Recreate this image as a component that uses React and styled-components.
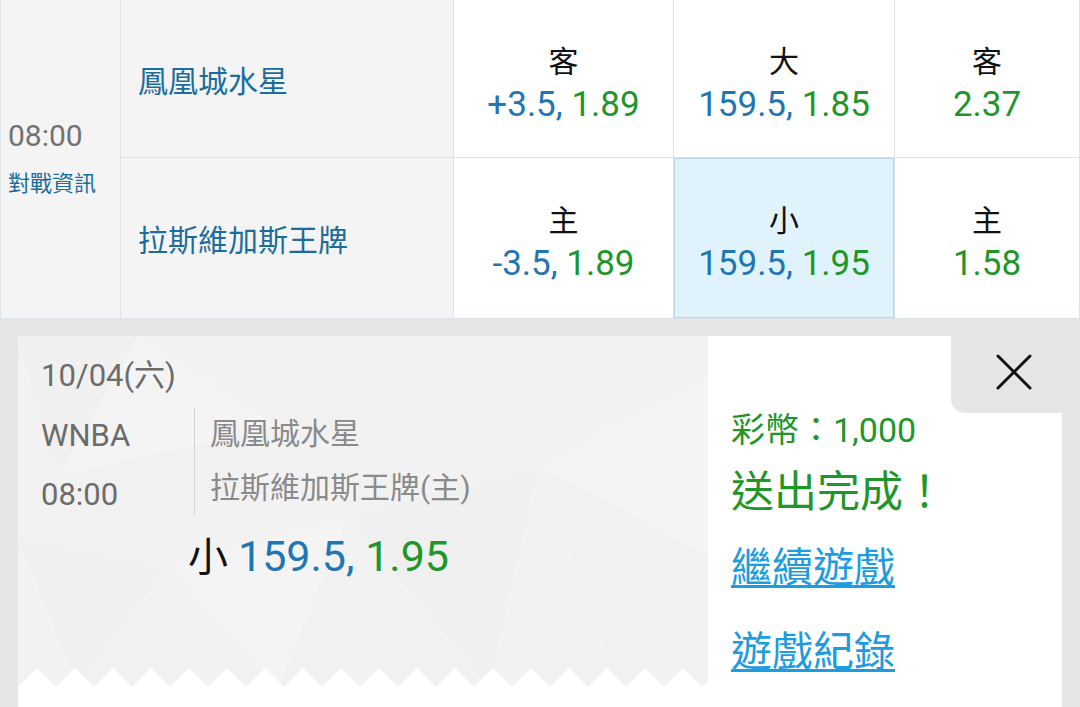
import React from 'react';
import styled, { createGlobalStyle } from 'styled-components';

const GlobalStyle = createGlobalStyle`
  html, body {
    margin: 0;
    padding: 0;
    height: 707px;
    overflow: hidden;
    background: #e6e6e6;
  }
  body {
    font-family: Roboto, "Noto Sans CJK TC", sans-serif;
  }
`;

const BLUE = '#1f76b2';
const GREEN = '#1f962a';
const LINE = '#dce3e8';

const patternSvg = `<svg xmlns='http://www.w3.org/2000/svg' width='690' height='351'>
<rect width='690' height='351' fill='#f2f2f2'/>
<polygon points='0,0 120,0 40,140' fill='#f0f0f0'/>
<polygon points='40,140 120,0 260,90' fill='#f4f4f4'/>
<polygon points='260,90 420,0 520,130' fill='#f1f1f1'/>
<polygon points='520,130 690,40 690,220' fill='#f4f4f4'/>
<polygon points='0,200 150,230 60,351' fill='#f0f0f0'/>
<polygon points='150,230 330,180 260,351' fill='#f4f4f4'/>
<polygon points='330,180 520,130 470,351' fill='#f0f0f0'/>
<polygon points='520,130 690,220 600,351' fill='#f1f1f1'/>
<polygon points='40,140 260,90 150,230' fill='#f1f1f1'/>
</svg>`;

const teethSvg = `<svg xmlns='http://www.w3.org/2000/svg' width='38' height='19'>
<polygon points='0,19 19,0 38,19' fill='#ffffff'/>
</svg>`;

const svgUrl = (s) => `url("data:image/svg+xml,${encodeURIComponent(s)}")`;

const Board = styled.div`
  display: grid;
  grid-template-columns: 120px 333px 220px 221px 1fr;
  grid-template-rows: 158px 161px;
  border-left: 1px solid ${LINE};
  background: #fff;
`;

const Cell = styled.div`
  border-right: 1px solid ${LINE};
  border-bottom: 1px solid ${LINE};
  box-sizing: border-box;
`;

const TimeCell = styled(Cell)`
  grid-row: span 2;
  background: #f4f4f4;
  display: flex;
  flex-direction: column;
  justify-content: center;
  padding: 0 0 4px 7px;
`;

const Clock = styled.div`
  font-size: 30px;
  line-height: 44px;
  color: #727272;
`;

const InfoLink = styled.div`
  margin-top: 9px;
  font-size: 22px;
  line-height: 34px;
  color: #1c6d9c;
`;

const TeamCell = styled(Cell)`
  background: #f4f4f4;
  display: flex;
  align-items: center;
  padding-left: 17px;
  font-size: 30px;
  color: #1c6d9c;
`;

const OddsCell = styled(Cell)`
  display: flex;
  flex-direction: column;
  align-items: center;
  justify-content: center;
  padding-top: 12px;
  background: ${(p) => (p.$active ? '#e0f3fc' : '#fff')};
  box-shadow: ${(p) => (p.$active ? 'inset 0 0 0 1px #b9d4e4' : 'none')};
`;

const Side = styled.div`
  font-size: 30px;
  line-height: 40px;
  color: #111;
`;

const Price = styled.div`
  font-size: 35px;
  line-height: 46px;
`;

const Blue = styled.span`
  color: ${BLUE};
`;

const Green = styled.span`
  color: ${GREEN};
`;

const Lower = styled.div`
  padding: 17px 18px 0 18px;
`;

const Card = styled.div`
  position: relative;
  display: flex;
  height: 380px;
  background: #fff;
`;

const Ticket = styled.div`
  width: 690px;
  height: 351px;
  box-sizing: border-box;
  padding: 18px 0 0 23px;
  background: ${svgUrl(teethSvg)} left bottom / 38px 19px repeat-x, ${svgUrl(patternSvg)} no-repeat;
`;

const DateLine = styled.div`
  font-size: 31px;
  line-height: 44px;
  color: #6c6c6c;
`;

const Meta = styled.div`
  display: flex;
  margin-top: 8px;
`;

const MetaLeft = styled.div`
  width: 153px;
  font-size: 31px;
  line-height: 59px;
  color: #6c6c6c;
`;

const Teams = styled.div`
  border-left: 1px solid #d6d6d6;
  padding-left: 15px;
  margin-top: 1px;
  height: 108px;
  font-size: 30px;
  line-height: 54px;
  color: #8a8a8a;
`;

const Pick = styled.div`
  margin: 4px 0 0 147px;
  font-size: 43px;
  line-height: 56px;
`;

const PickSide = styled.span`
  color: #111;
  font-size: 40px;
  margin-right: 10px;
`;

const Result = styled.div`
  flex: 1;
  display: flex;
  flex-direction: column;
  padding: 72px 0 0 23px;
`;

const Coins = styled.div`
  font-size: 34px;
  line-height: 44px;
  color: ${GREEN};
`;

const Done = styled.div`
  margin-top: 12px;
  font-size: 43px;
  line-height: 56px;
  color: ${GREEN};
`;

const Action = styled.a`
  align-self: flex-start;
  margin-top: ${(p) => p.$gap}px;
  font-size: 41px;
  line-height: 60px;
  color: #1d9ddd;
  text-decoration: underline;
  text-decoration-thickness: 3px;
  text-underline-offset: 3px;
`;

const CloseTab = styled.button`
  position: absolute;
  top: 0;
  right: 0;
  width: 111px;
  height: 77px;
  border: none;
  padding: 18px 30px 0 0;
  box-sizing: border-box;
  background: #e6e6e6;
  border-bottom-left-radius: 14px;
  display: flex;
  align-items: flex-start;
  justify-content: flex-end;
`;

const rows = [
  { team: '鳳凰城水星', side: '客', hcp: '+3.5', hcpOdds: '1.89', ou: '大', ouOdds: '1.85', ml: '2.37' },
  { team: '拉斯維加斯王牌', side: '主', hcp: '-3.5', hcpOdds: '1.89', ou: '小', ouOdds: '1.95', ml: '1.58', active: true },
];

const App = () => {
  return (
    <>
      <GlobalStyle />
      <Board>
        <TimeCell>
          <Clock>08:00</Clock>
          <InfoLink>對戰資訊</InfoLink>
        </TimeCell>
        {rows.map((r) => (
          <React.Fragment key={r.team}>
            <TeamCell>{r.team}</TeamCell>
            <OddsCell>
              <Side>{r.side}</Side>
              <Price><Blue>{r.hcp},</Blue> <Green>{r.hcpOdds}</Green></Price>
            </OddsCell>
            <OddsCell $active={r.active}>
              <Side>{r.ou}</Side>
              <Price><Blue>159.5,</Blue> <Green>{r.ouOdds}</Green></Price>
            </OddsCell>
            <OddsCell>
              <Side>{r.side}</Side>
              <Price><Green>{r.ml}</Green></Price>
            </OddsCell>
          </React.Fragment>
        ))}
      </Board>

      <Lower>
        <Card>
          <Ticket>
            <DateLine>10/04(六)</DateLine>
            <Meta>
              <MetaLeft>
                <div>WNBA</div>
                <div>08:00</div>
              </MetaLeft>
              <Teams>
                <div>鳳凰城水星</div>
                <div>拉斯維加斯王牌(主)</div>
              </Teams>
            </Meta>
            <Pick>
              <PickSide>小</PickSide>
              <Blue>159.5,</Blue> <Green>1.95</Green>
            </Pick>
          </Ticket>
          <Result>
            <Coins>彩幣：1,000</Coins>
            <Done>送出完成！</Done>
            <Action href="#" $gap={18}>繼續遊戲</Action>
            <Action href="#" $gap={24}>遊戲紀錄</Action>
          </Result>
          <CloseTab aria-label="close">
            <svg width="36" height="36" viewBox="0 0 36 36">
              <path d="M2 2 L34 34 M34 2 L2 34" stroke="#111" strokeWidth="3" strokeLinecap="round" />
            </svg>
          </CloseTab>
        </Card>
      </Lower>
    </>
  );
};

export default App;
